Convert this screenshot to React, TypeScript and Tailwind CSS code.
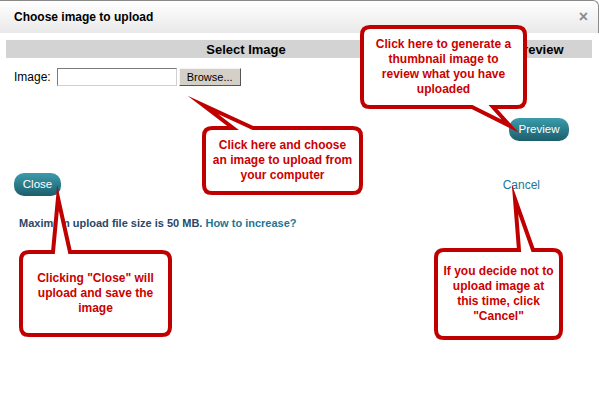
import React from "react";

type Callout = {
  x: number;
  y: number;
  w: number;
  h: number;
  side: "top" | "bottom";
  a: number;
  b: number;
  tx: number;
  ty: number;
  lines: string[];
};

const CALLOUTS: Callout[] = [
  {
    x: 362, y: 27, w: 163, h: 80, side: "bottom", a: 472, b: 493, tx: 510, ty: 126,
    lines: ["Click here to generate a", "thumbnail image to", "review what you have", "uploaded"],
  },
  {
    x: 204, y: 128, w: 157, h: 65, side: "top", a: 233, b: 253, tx: 203, ty: 105,
    lines: ["Click here and choose", "an image to upload from", "your computer"],
  },
  {
    x: 21, y: 252, w: 149, h: 83, side: "top", a: 53, b: 70, tx: 58, ty: 198,
    lines: ['Clicking "Close" will', "upload and save the", "image"],
  },
  {
    x: 436, y: 250, w: 125, h: 88, side: "top", a: 519, b: 533, tx: 515, ty: 199,
    lines: ["If you decide not to", "upload image at", "this time, click", '"Cancel"'],
  },
];

const R = 8;

function calloutPath(c: Callout) {
  const { x, y, w, h, a, b, tx, ty } = c;
  const top =
    c.side === "top"
      ? `L${a},${y} L${tx},${ty} L${b},${y} `
      : "";
  const bottom =
    c.side === "bottom"
      ? `L${b},${y + h} L${tx},${ty} L${a},${y + h} `
      : "";
  return (
    `M${x + R},${y} ${top}L${x + w - R},${y} Q${x + w},${y} ${x + w},${y + R} ` +
    `L${x + w},${y + h - R} Q${x + w},${y + h} ${x + w - R},${y + h} ${bottom}` +
    `L${x + R},${y + h} Q${x},${y + h} ${x},${y + h - R} L${x},${y + R} Q${x},${y} ${x + R},${y} Z`
  );
}

function TealButton({ label, className }: { label: string; className?: string }) {
  return (
    <button
      className={
        "h-[23px] rounded-[10px] bg-gradient-to-b from-[#3c9cac] to-[#1c5e6c] text-[11.5px] text-white " +
        (className ?? "")
      }
    >
      {label}
    </button>
  );
}

export default function App() {
  return (
    <div className="relative w-[599px] h-[398px] overflow-hidden bg-white font-['Liberation_Sans',Arial,sans-serif] text-black">
      {/* dialog header */}
      <div className="flex h-[33px] items-center justify-between rounded-tr-[6px] border-t border-r border-[#8a8a8a] bg-gradient-to-b from-white to-[#e9e9e9] pl-[14px] pr-[10px]">
        <span className="text-[12px] font-bold">Choose image to upload</span>
        <span className="text-[16px] font-bold leading-none text-[#8c8c8c]">×</span>
      </div>

      <div className="px-[6px] pt-[7px]">
        <div className="grid h-[18px] w-[586px] grid-cols-[480px_1fr] items-center bg-[#d3d3d3] text-[13px] font-bold">
          <span className="text-center">Select Image</span>
          <span className="text-center">Preview</span>
        </div>

        <div className="mt-[10px] flex items-center pl-[8px]">
          <span className="text-[12px]">Image:</span>
          <input className="ml-[6px] h-[18px] w-[120px] border border-[#7a7a7a] border-r-[#d0d0d0] border-b-[#d0d0d0] bg-white" />
          <button className="ml-[2px] h-[18px] w-[62px] border border-[#f4f4f4] border-r-[#555] border-b-[#555] bg-[#d4d0c8] text-[11px]">
            Browse...
          </button>
        </div>

        <div className="mt-[32px] flex justify-end pr-[24px]">
          <TealButton label="Preview" className="w-[60px]" />
        </div>

        <div className="mt-[32px] flex items-start justify-between pl-[8px] pr-[53px]">
          <TealButton label="Close" className="w-[47px]" />
          <a className="mt-[3px] text-[12px] text-[#1a779c]">Cancel</a>
        </div>

        <p className="mt-[19px] pl-[13px] text-[11px] font-bold text-[#2a4766]">
          Maximum upload file size is 50 MB.{" "}
          <a className="text-[#1d7595]">How to increase?</a>
        </p>
      </div>

      {/* annotation callouts */}
      <svg className="pointer-events-none absolute left-0 top-0" width={599} height={398}>
        {CALLOUTS.map((c, i) => (
          <path
            key={i}
            d={calloutPath(c)}
            fill="white"
            stroke="#c00000"
            strokeWidth={4}
            strokeLinejoin="miter"
            strokeMiterlimit={20}
          />
        ))}
      </svg>
      {CALLOUTS.map((c, i) => (
        <div
          key={i}
          className="absolute flex items-center justify-center text-center text-[12px] font-bold leading-[15px] text-[#cc0000]"
          style={{ left: c.x, top: c.y, width: c.w, height: c.h }}
        >
          <p>
            {c.lines.map((l, j) => (
              <React.Fragment key={j}>
                {j > 0 && <br />}
                {l}
              </React.Fragment>
            ))}
          </p>
        </div>
      ))}
    </div>
  );
}
